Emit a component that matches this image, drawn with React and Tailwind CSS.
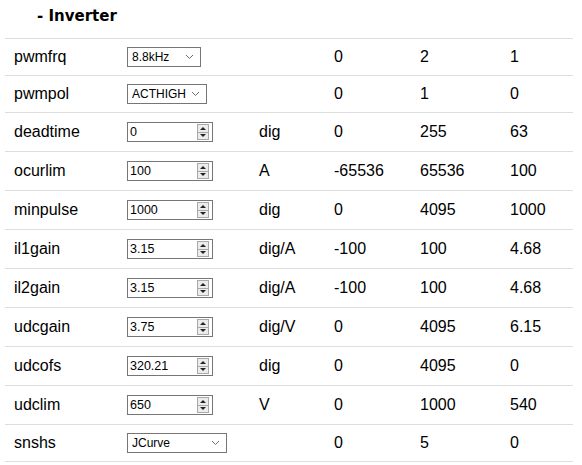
const rows = [
  { name: 'pwmfrq', kind: 'select', value: '8.8kHz', w: 'w-[74px]', unit: '', min: '0', max: '2', def: '1' },
  { name: 'pwmpol', kind: 'select', value: 'ACTHIGH', w: 'w-[80px]', unit: '', min: '0', max: '1', def: '0' },
  { name: 'deadtime', kind: 'number', value: '0', unit: 'dig', min: '0', max: '255', def: '63' },
  { name: 'ocurlim', kind: 'number', value: '100', unit: 'A', min: '-65536', max: '65536', def: '100' },
  { name: 'minpulse', kind: 'number', value: '1000', unit: 'dig', min: '0', max: '4095', def: '1000' },
  { name: 'il1gain', kind: 'number', value: '3.15', unit: 'dig/A', min: '-100', max: '100', def: '4.68' },
  { name: 'il2gain', kind: 'number', value: '3.15', unit: 'dig/A', min: '-100', max: '100', def: '4.68' },
  { name: 'udcgain', kind: 'number', value: '3.75', unit: 'dig/V', min: '0', max: '4095', def: '6.15' },
  { name: 'udcofs', kind: 'number', value: '320.21', unit: 'dig', min: '0', max: '4095', def: '0' },
  { name: 'udclim', kind: 'number', value: '650', unit: 'V', min: '0', max: '1000', def: '540' },
  { name: 'snshs', kind: 'select', value: 'JCurve', w: 'w-[100px]', unit: '', min: '0', max: '5', def: '0' },
];

const Chevron = () => (
  <svg width="9" height="6" viewBox="0 0 9 6" className="shrink-0">
    <path d="M1 1 L4.5 4.5 L8 1" fill="none" stroke="#6d6d6d" strokeWidth="1" />
  </svg>
);

const SelectBox = ({ value, w }) => (
  <div className={`${w} h-[20px] border border-[#767676] bg-white flex items-center justify-between pl-[4px] pr-[6px] text-[12px] text-black`}>
    <span>{value}</span>
    <Chevron />
  </div>
);

const NumberBox = ({ value }) => (
  <div className="w-[86px] h-[20px] border border-[#767676] bg-white flex items-center justify-between pl-[2px] pr-[3px] text-[12.5px] text-black">
    <span>{value}</span>
    <div className="w-[12px] h-[16px] border border-[#a9a9a9] bg-[#ececec] flex flex-col">
      <div className="flex-1 flex items-center justify-center border-b border-[#a9a9a9]">
        <svg width="6" height="3" viewBox="0 0 6 3"><path d="M0 3 L3 0 L6 3 Z" fill="#222" /></svg>
      </div>
      <div className="flex-1 flex items-center justify-center">
        <svg width="6" height="3" viewBox="0 0 6 3"><path d="M0 0 L3 3 L6 0 Z" fill="#222" /></svg>
      </div>
    </div>
  </div>
);

export default function App() {
  return (
    <div className="w-[582px] h-[465px] bg-white overflow-hidden text-black" style={{ fontFamily: '"Liberation Sans", Arial, sans-serif' }}>
      <div className="h-[38px] pl-[37px] pt-[6px]">
        <h2 className="text-[15px] font-bold leading-[20px]" style={{ fontFamily: '"DejaVu Sans", Verdana, sans-serif' }}>
          - Inverter
        </h2>
      </div>
      <div className="ml-[5px] w-[568px] border-t border-[#dddddd]">
        {rows.map((r) => (
          <div
            key={r.name}
            className={`grid grid-cols-[114px_133px_75px_86px_90px_70px] items-center border-b border-[#dddddd] text-[16px] ${r.kind === 'number' ? 'h-[39px]' : 'h-[37px]'}`}
          >
            <div className="pl-[9px]">{r.name}</div>
            <div className="pl-[8px]">
              {r.kind === 'select' ? <SelectBox value={r.value} w={r.w} /> : <NumberBox value={r.value} />}
            </div>
            <div className="pl-[7px]">{r.unit}</div>
            <div className="pl-[7px]">{r.min}</div>
            <div className="pl-[7px]">{r.max}</div>
            <div className="pl-[7px]">{r.def}</div>
          </div>
        ))}
      </div>
    </div>
  );
}
